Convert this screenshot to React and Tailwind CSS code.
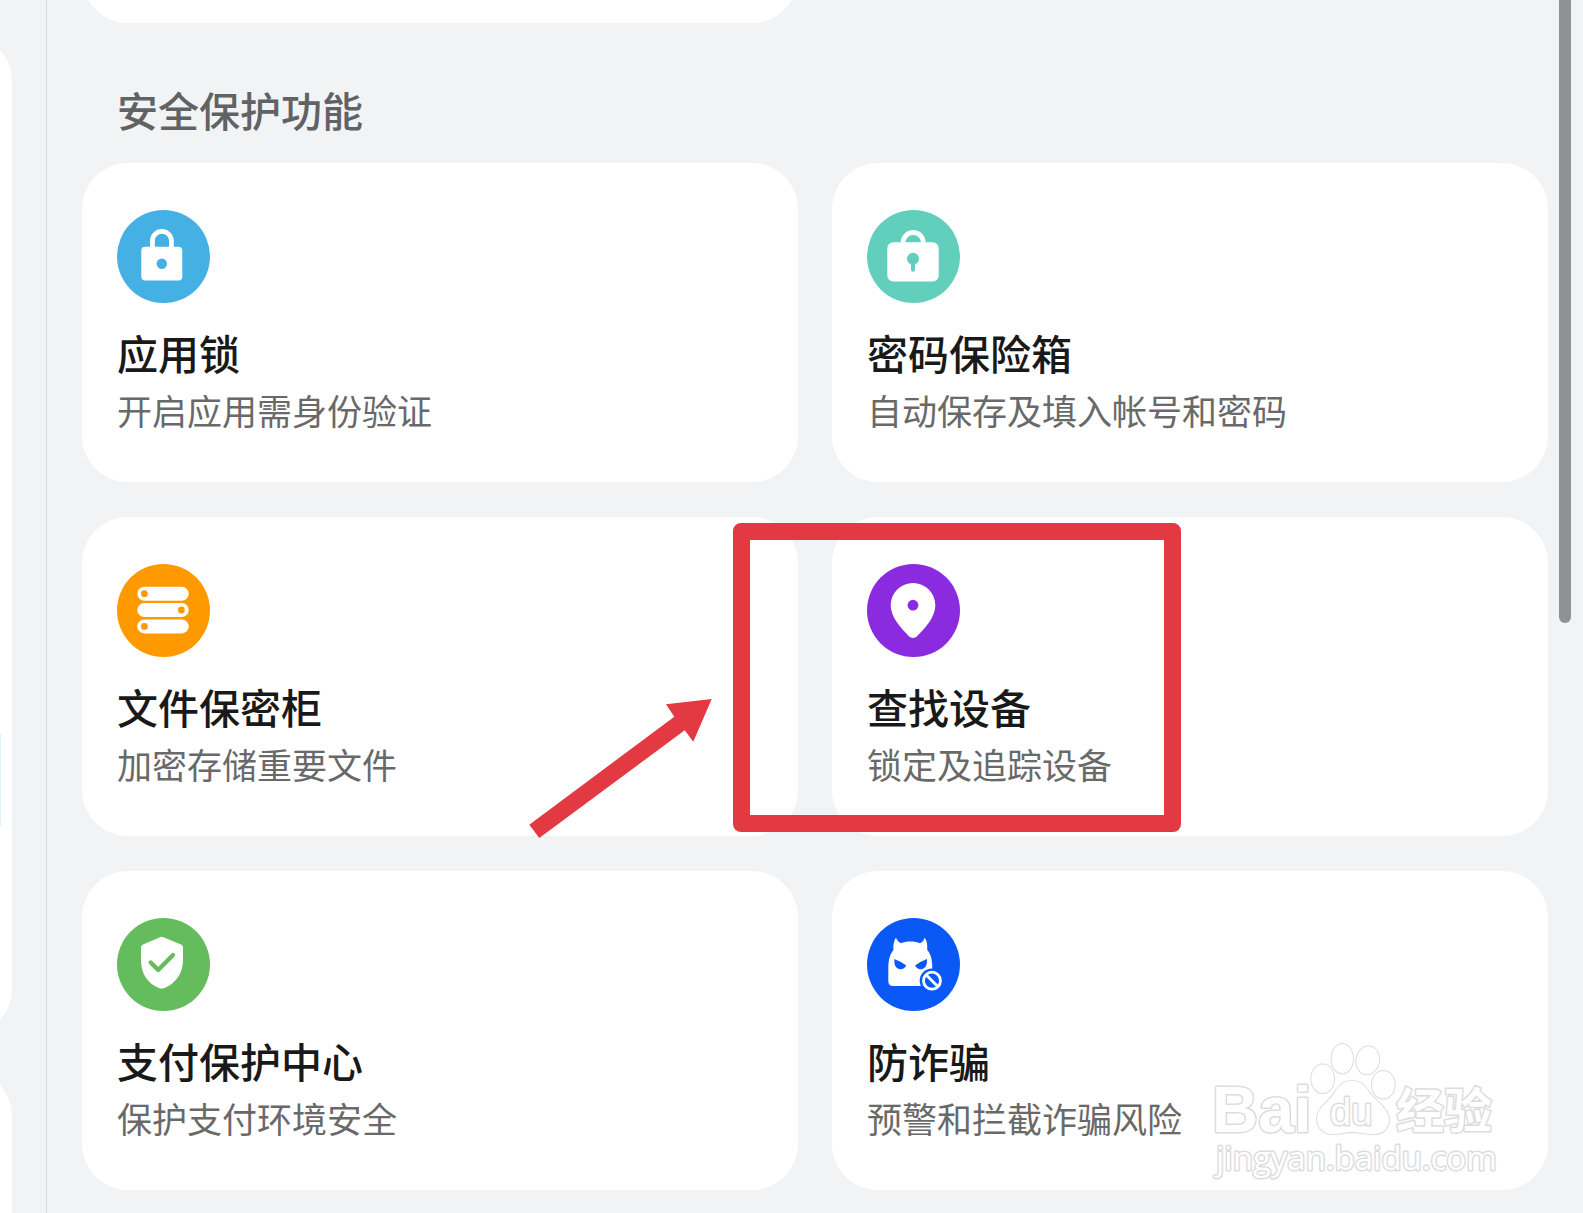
import React from 'react';

const LockIcon = () => (
  <svg viewBox="0 0 93 93" className="size-full" aria-hidden="true">
    <path d="M35.4 39V30.8a9.5 9.5 0 0 1 19 0V39" fill="none" stroke="#fff" strokeWidth="4.8" />
    <rect x="24.3" y="36.8" width="41" height="33.6" rx="4" fill="#fff" />
    <circle cx="44.8" cy="53.7" r="5.2" fill="#45b0e3" />
  </svg>
);

const SafeIcon = () => (
  <svg viewBox="0 0 93 93" className="size-full" aria-hidden="true">
    <path d="M36.1 35v-2.4a10.1 10.1 0 0 1 20.200 0V35" fill="none" stroke="#fff" strokeWidth="4.8" />
    <rect x="20.3" y="32.3" width="51.4" height="39.2" rx="6" fill="#fff" />
    <circle cx="46" cy="48.8" r="6" fill="#62cfbd" />
    <path d="M46 50v9.7" stroke="#62cfbd" strokeWidth="4" strokeLinecap="round" />
  </svg>
);

const CabinetIcon = () => (
  <svg viewBox="0 0 93 93" className="size-full" aria-hidden="true">
    <g fill="#fff">
      <rect x="20.3" y="22.7" width="51.4" height="14" rx="7" />
      <rect x="20.3" y="39" width="51.4" height="14" rx="7" />
      <rect x="20.3" y="55.4" width="51.4" height="14" rx="7" />
    </g>
    <g fill="#ff9900">
      <circle cx="27.4" cy="29.7" r="3.4" />
      <circle cx="64.4" cy="46" r="3.4" />
      <circle cx="27.4" cy="62.4" r="3.4" />
    </g>
  </svg>
);

const PinIcon = () => (
  <svg viewBox="0 0 93 93" className="size-full" aria-hidden="true">
    <path
      d="M23.7 41.3A22.3 22.3 0 0 1 68.3 41.3C68.3 53 58 64.5 50 72.2Q46 75.8 42 72.2C34 64.5 23.7 53 23.7 41.3Z"
      fill="#fff"
    />
    <circle cx="46" cy="41.2" r="5.4" fill="#8a2be0" />
  </svg>
);

const ShieldIcon = () => (
  <svg viewBox="0 0 93 93" className="size-full" aria-hidden="true">
    <path
      d="M43 19.2Q44.7 18.4 46.4 19.2L64 26.6Q66 27.5 66 29.5V42C66 56 58 66 47 70.2Q44.7 71 42.4 70.2C31 66 24 56 24 42V29.5Q24 27.5 26 26.6Z"
      fill="#fff"
    />
    <path
      d="M33.7 44.5L41.2 52L56 37"
      fill="none"
      stroke="#65bc5c"
      strokeWidth="4.4"
      strokeLinecap="round"
      strokeLinejoin="round"
    />
  </svg>
);

const FraudIcon = () => (
  <svg viewBox="0 0 93 93" className="size-full" aria-hidden="true">
    <path
      d="M21.3 50C21.3 42 23 36 26.5 32C26 27 27 22 29 19.7C30 22 31.5 24 34 25.3C39 22.8 48 22.8 53 25.3C55.5 24 57 22 57.7 19.7C59.7 22 60.7 27 60.2 32C64 36 65.3 42 65.3 50V68H26Q21.3 68 21.3 63Z"
      fill="#fff"
    />
    <g fill="#0a59f7">
      <path d="M27.3 41Q34 43.5 39.3 47.5C37 52.5 30 52 28.3 48Q27 45 27.3 41Z" />
      <path d="M60 41Q53.3 43.5 48 47.5C50.3 52.5 57.3 52 59 48Q60.3 45 60 41Z" />
      <circle cx="65" cy="62.7" r="12.3" />
    </g>
    <circle cx="65" cy="62.7" r="8.5" fill="none" stroke="#fff" strokeWidth="2.8" />
    <path d="M59 56.7L71 68.7" stroke="#fff" strokeWidth="2.8" />
  </svg>
);

const FEATURES = [
  { id: 'lock', title: '应用锁', desc: '开启应用需身份验证', color: 'bg-[#45b0e3]', Icon: LockIcon },
  { id: 'safe', title: '密码保险箱', desc: '自动保存及填入帐号和密码', color: 'bg-[#62cfbd]', Icon: SafeIcon },
  { id: 'cabinet', title: '文件保密柜', desc: '加密存储重要文件', color: 'bg-[#ff9900]', Icon: CabinetIcon },
  { id: 'find', title: '查找设备', desc: '锁定及追踪设备', color: 'bg-[#8a2be0]', Icon: PinIcon },
  { id: 'pay', title: '支付保护中心', desc: '保护支付环境安全', color: 'bg-[#65bc5c]', Icon: ShieldIcon },
  { id: 'fraud', title: '防诈骗', desc: '预警和拦截诈骗风险', color: 'bg-[#0a59f7]', Icon: FraudIcon },
];

// red frame and arrow pointing at the highlighted card
const Highlight = () => (
  <>
    <div className="pointer-events-none absolute -left-[99px] top-[6px] h-[309px] w-[448px] rounded-lg border-[17px] border-[#e33943]" />
    <svg
      viewBox="0 0 184 140"
      className="pointer-events-none absolute -left-[303px] top-[182px] h-[140px] w-[184px]"
      aria-hidden="true"
    >
      <path d="M0.3 125.7L145.3 17.7L137 5.3L182.7 0L164.3 42.7L155.7 31.3L10.3 139Z" fill="#e33943" />
    </svg>
  </>
);

const Watermark = () => (
  <svg
    viewBox="0 0 292 144"
    className="pointer-events-none absolute bottom-[6px] right-[46px] h-[144px] w-[292px] [paint-order:stroke]"
    fill="#fff"
    stroke="#dcdcdc"
    strokeWidth="3"
    strokeLinejoin="round"
  >
    <g strokeWidth="2">
      <ellipse cx="112.7" cy="38.7" rx="11.3" ry="14.3" />
      <ellipse cx="132.3" cy="18.7" rx="10.7" ry="14.7" />
      <ellipse cx="157.7" cy="20.3" rx="11.3" ry="14" transform="rotate(10 157.7 20.3)" />
      <ellipse cx="173.3" cy="44.8" rx="11.3" ry="13.8" />
      <path d="M142 41C150 41 155 45 159 52C164 60 179 68 179 80C179 90 170 95 161 94C150 93 148 92 142 92C136 92 131 94 123 94C113 94 107 88 107 78C107 68 120 61 125 52C129 45 134 41 142 41Z" />
    </g>
    <text x="2" y="92" className="font-['Liberation_Sans',sans-serif] text-[64px] font-bold">Bai</text>
    <text x="120" y="85" className="font-['Liberation_Sans',sans-serif] text-[38px]">du</text>
    <text x="186" y="88" className="font-['Noto_Sans_CJK_SC',sans-serif] text-[48px] font-bold">经验</text>
    <text x="6" y="130" className="font-['Open_Sans',sans-serif] text-[33px]">jingyan.baidu.com</text>
  </svg>
);

const FeatureCard = ({ feature, children }) => {
  const { title, desc, color, Icon } = feature;

  return (
    <div className="relative">
      <button
        type="button"
        className="flex h-full w-full flex-col items-start rounded-[46px] bg-white px-[35px] pb-[52px] pt-[47px] text-left"
      >
        <span className={`block size-[93px] rounded-full ${color}`}>
          <Icon />
        </span>
        <span className="mt-[25px] text-[41px] font-medium leading-[48px] text-[#191919]">{title}</span>
        <span className="mt-[14px] text-[35px] leading-[40px] text-[#696969]">{desc}</span>
      </button>
      {children}
    </div>
  );
};

const Sidebar = () => (
  <aside className="flex w-[47px] shrink-0 flex-col items-end gap-[35px] overflow-hidden border-r border-[#d8dadc] pr-[34px] pt-[35px]">
    <div className="flex h-[1000px] w-[400px] shrink-0 flex-col rounded-[46px] bg-white px-[11px] pt-[697px]">
      <div className="h-24 rounded-sm bg-[#e3f3fa]" />
    </div>
    <div className="w-[400px] flex-1 rounded-t-[46px] bg-white" />
  </aside>
);

const App = () => {
  return (
    <div className="relative flex min-h-screen overflow-hidden bg-[#f1f3f5] font-['Noto_Sans_CJK_SC',sans-serif]">
      <Sidebar />
      <main className="flex-1 px-[35px] pb-[23px]">
        <div className="grid grid-cols-2 gap-[34px]">
          <div className="-mt-[77px] h-[100px] rounded-[46px] bg-white" />
        </div>
        <h2 className="mb-[30px] mt-[62px] px-[35px] text-[41px] font-medium leading-[48px] text-[#606264]">安全保护功能</h2>
        <div className="grid grid-cols-2 gap-x-[34px] gap-y-[35px]">
          {FEATURES.map(feature => (
            <FeatureCard key={feature.id} feature={feature}>
              {feature.id === 'find' && <Highlight />}
              {feature.id === 'fraud' && <Watermark />}
            </FeatureCard>
          ))}
        </div>
      </main>
      <div className="absolute right-3 top-0 h-[623px] w-3 rounded-b-full bg-[#909193]" />
    </div>
  );
};

export default App;
